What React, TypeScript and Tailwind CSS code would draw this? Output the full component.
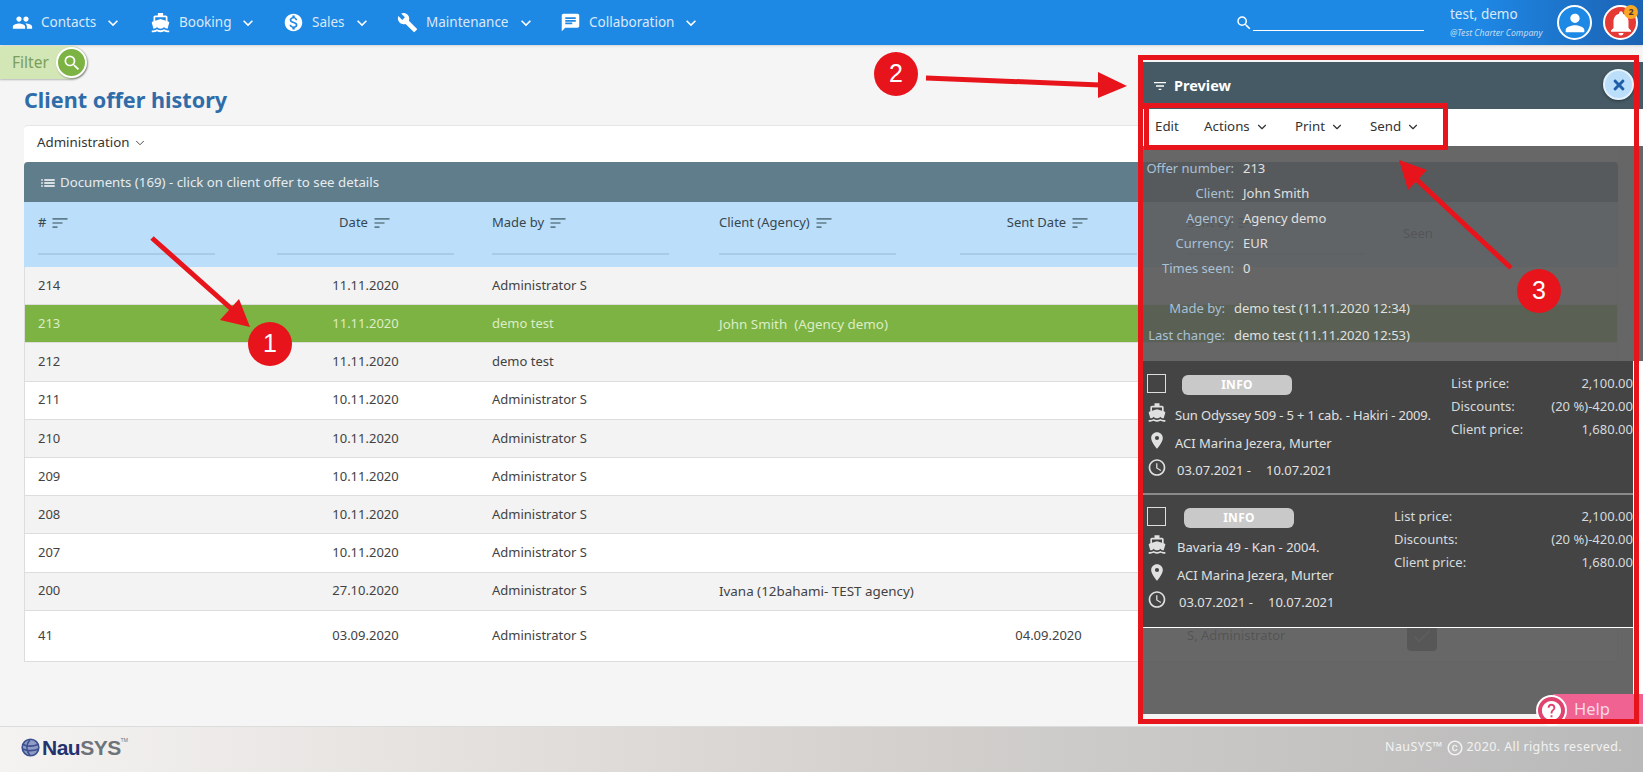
import { ChevronDown } from "lucide-react";
import {
  MdAccessTime,
  MdBuild,
  MdChat,
  MdCopyright,
  MdDirectionsBoat,
  MdFilterList,
  MdHelp,
  MdKeyboardArrowDown,
  MdList,
  MdLocationOn,
  MdMonetizationOn,
  MdNotifications,
  MdPeople,
  MdPerson,
  MdSearch,
  MdSort,
  MdCheck,
} from "react-icons/md";
import { FaTimes } from "react-icons/fa";

const menu = [
  { label: "Contacts", icon: MdPeople, width: "w-[138px]" },
  { label: "Booking", icon: MdDirectionsBoat, width: "w-[133px]" },
  { label: "Sales", icon: MdMonetizationOn, width: "w-[114px]" },
  { label: "Maintenance", icon: MdBuild, width: "w-[163px]" },
  { label: "Collaboration", icon: MdChat, width: "w-[150px]" },
];

const gridCols = "grid-cols-[239px_215px_227px_241px_227px_216px_1fr]";

const headers = [
  { label: "#" },
  { label: "Date", center: true },
  { label: "Made by" },
  { label: "Client (Agency)" },
  { label: "Sent Date", center: true },
  { label: "Sent by" },
];

const rows = [
  { id: "214", date: "11.11.2020", by: "Administrator S", bg: "bg-[#f3f3f3]" },
  { id: "213", date: "11.11.2020", by: "demo test", client: "John Smith\u00a0\u00a0(Agency demo)", bg: "bg-[#7cb342]", active: true },
  { id: "212", date: "11.11.2020", by: "demo test", bg: "bg-[#f3f3f3]" },
  { id: "211", date: "10.11.2020", by: "Administrator S", bg: "bg-white" },
  { id: "210", date: "10.11.2020", by: "Administrator S", bg: "bg-[#f3f3f3]" },
  { id: "209", date: "10.11.2020", by: "Administrator S", bg: "bg-white" },
  { id: "208", date: "10.11.2020", by: "Administrator S", bg: "bg-[#f3f3f3]" },
  { id: "207", date: "10.11.2020", by: "Administrator S", bg: "bg-white" },
  { id: "200", date: "27.10.2020", by: "Administrator S", client: "Ivana (12bahami- TEST agency)", bg: "bg-[#f3f3f3]" },
];

const info = [
  { label: "Offer number:", value: "213", cls: "h-[25px]", w: "w-[91px]" },
  { label: "Client:", value: "John Smith", cls: "h-[25px]", w: "w-[91px]" },
  { label: "Agency:", value: "Agency demo", cls: "h-[25px]", w: "w-[91px]" },
  { label: "Currency:", value: "EUR", cls: "h-[25px]", w: "w-[91px]" },
  { label: "Times seen:", value: "0", cls: "h-[26px]", w: "w-[91px]" },
  { label: "Made by:", value: "demo test (11.11.2020 12:34)", cls: "h-[27px] mt-[13px]", w: "w-[82px]" },
  { label: "Last change:", value: "demo test (11.11.2020 12:53)", cls: "h-[28px]", w: "w-[82px]" },
];

function Offer({
  yacht,
  yachtCls = "",
  priceWidth,
  offset,
  border,
  height,
  pad,
  listGap,
}: {
  yacht: string;
  yachtCls?: string;
  priceWidth: string;
  offset: string;
  border: string;
  height: string;
  pad: string;
  listGap: string;
}) {
  const prices = [
    ["List price:", "2,100.00"],
    ["Discounts:", "(20 %)-420.00"],
    ["Client price:", "1,680.00"],
  ];
  return (
    <div className={`flex justify-between bg-[#444444] pl-1 text-[13px] text-[#e0e0e0] ${border} ${height} ${pad}`}>
      <div>
        <div className="flex h-[19px] items-start">
          <span className="block size-[19px] border-[1.5px] border-[#dddddd]" />
          <span
            className={`mt-px flex h-5 w-[110px] items-center justify-center rounded-md bg-[#c9c9c9] text-[12px] font-bold tracking-wide text-white ${
              offset === "pl-[2px]" ? "ml-[18px]" : "ml-4"
            }`}
          >
            INFO
          </span>
        </div>
        <div className={listGap}>
          <div className="flex h-[27.5px] items-center">
            <MdDirectionsBoat className="-mt-[6px] w-5 shrink-0 text-[#e0e0e0]" size={21} />
            <span className={`ml-2 whitespace-nowrap ${offset} ${yachtCls}`}>{yacht}</span>
          </div>
          <div className="flex h-[27.5px] items-center">
            <MdLocationOn className="-mt-[6px] w-5 shrink-0 text-[#e0e0e0]" size={21} />
            <span className={`ml-2 whitespace-nowrap ${offset}`}>ACI Marina Jezera, Murter</span>
          </div>
          <div className="flex h-[27.5px] items-center">
            <MdAccessTime className="-mt-[6px] w-5 shrink-0 text-[#e0e0e0]" size={21} />
            <span className={`ml-[10px] w-[89px] whitespace-nowrap ${offset}`}>03.07.2021 -</span>
            <span className={`whitespace-nowrap ${offset === "pl-[2px]" ? "ml-[2px]" : ""}`}>10.07.2021</span>
          </div>
        </div>
      </div>
      <div className={`-mt-[2px] ${priceWidth}`}>
        {prices.map(([k, v]) => (
          <div key={k} className="flex h-[23px] items-center justify-between text-[#d5dadd]">
            <span>{k}</span>
            <span>{v}</span>
          </div>
        ))}
      </div>
    </div>
  );
}

export default function App() {
  return (
    <div className="relative flex h-[772px] w-full flex-col overflow-hidden bg-[#f5f5f5] font-['Noto_Sans',sans-serif] text-[13px] text-[#424242]">
      {/* top bar */}
      <header className="flex h-[45px] shrink-0 items-center bg-linear-to-r from-[#1e88e5] from-[90%] to-[#1b62b3] pl-3 text-[#dbe9f7] shadow-sm">
        {menu.map(({ label, icon: Icon, width }) => (
          <div key={label} className={`flex shrink-0 items-center ${width}`}>
            <Icon size={21} className="text-white" />
            <span className="ml-2 text-[13.5px]">{label}</span>
            <MdKeyboardArrowDown size={20} className="ml-[7px] text-white" />
          </div>
        ))}
        <div className="ml-[525px] flex shrink-0 items-center">
          <MdSearch size={18} className="text-white" />
          <div className="mt-[16px] h-px w-[171px] bg-white" />
        </div>
        <div className="ml-[26px] w-[107px] shrink-0 -mt-[2px]">
          <div className="text-[13.5px] leading-[18px]">test, demo</div>
          <div className="mt-[4px] whitespace-nowrap text-[8.7px] italic leading-[12px] text-[#c5dcf2]">@Test Charter Company</div>
        </div>
        <div className="flex size-[35px] shrink-0 items-center justify-center rounded-full border-2 border-white bg-[#1e88e5]">
          <MdPerson size={28} className="text-white" />
        </div>
        <div className="relative ml-[11px] flex size-[35px] shrink-0 items-center justify-center rounded-full border-2 border-white bg-[#e53935]">
          <MdNotifications size={30} className="text-white" />
          <span className="absolute -right-[2px] -top-[2px] flex size-[14px] items-center justify-center rounded-full bg-[#f9a825] text-[9px] font-bold text-[#4e342e]">
            2
          </span>
        </div>
      </header>

      {/* page */}
      <main className="min-h-0 flex-1 pr-[25px]">
        <div className="relative mt-px flex h-[33px] w-[87px] items-center rounded-r-full bg-[#d3e6b6] pl-3 shadow-[0_1px_2px_rgba(0,0,0,0.25)]">
          <span className="text-[15.5px] text-[#7a9f5a]">Filter</span>
          <span className="absolute right-0 top-px flex size-[31px] items-center justify-center rounded-full border-2 border-white bg-[#7cb342] shadow-[1px_1px_2px_rgba(0,0,0,0.35)]">
            <MdSearch size={20} className="text-white" />
          </span>
        </div>
        <div className="pl-6">
          <h1 className="mt-[6px] h-[40px] text-[21.6px] font-bold leading-[30px] text-[#2f6ca8]">Client offer history</h1>
          <div className="flex h-[37px] items-center rounded-t-sm border-t border-[#e6e6e6] bg-white pb-[2px] pl-[13px] text-[13.3px] text-[#333333]">
            Administration
            <ChevronDown size={14} strokeWidth={1.5} className="ml-[3px]" />
          </div>
          <div className="flex h-10 items-center rounded-t-sm bg-[#607d8b] pl-[15px] pt-px text-[#e6ecef]">
            <MdList size={18} className="text-white" />
            <span className="ml-[3px] text-[13.25px]">Documents (169) - click on client offer to see details</span>
          </div>
          <div className={`grid h-[65px] bg-[#bbdefb] pl-[14px] text-[#37474f] ${gridCols}`}>
            {headers.map((h) => (
              <div key={h.label} className="pt-[10px]">
                <div className={`flex h-[21px] w-[177px] items-center ${h.center ? "justify-center" : ""}`}>
                  <span>{h.label}</span>
                  <MdSort size={20} className="ml-1 text-[#607d8b]" />
                </div>
                <div className="mt-[20px] h-[2px] w-[177px] bg-[#a8cbe8]" />
              </div>
            ))}
            <div className="flex h-[64px] items-center text-[#37474f]">Seen</div>
          </div>
          <div className="border-x border-b border-[#dddddd]">
            {rows.map((r) => (
              <div
                key={r.id}
                className={`grid h-[38.2px] items-center border-b border-[#dddddd] pl-[13px] ${gridCols} ${r.bg} ${
                  r.active ? "text-[#dcedc8]" : ""
                }`}
              >
                <span>{r.id}</span>
                <span className="w-[177px] text-center">{r.date}</span>
                <span>{r.by}</span>
                <span className="text-[13.4px]">{r.client}</span>
              </div>
            ))}
            <div className={`grid h-[50px] items-center bg-white pl-[13px] ${gridCols}`}>
              <span>41</span>
              <span className="w-[177px] text-center">03.09.2020</span>
              <span>Administrator S</span>
              <span />
              <span className="w-[177px] text-center">04.09.2020</span>
              <span>S, Administrator</span>
              <span className="ml-1 flex h-[31px] w-[30px] items-center justify-center rounded-sm bg-[#5f5f5f] text-[#999999]">
                <MdCheck size={22} />
              </span>
            </div>
          </div>
        </div>
      </main>

      <footer className="flex h-[46px] shrink-0 items-center justify-between border-t border-[#dcdcdc] bg-linear-to-r from-[#f5f3f1] via-[#d6d3d0] to-[#b9b9b9] pb-[4px] pl-[21px] pr-[21px]">
        <div className="flex items-center">
          <svg width="19" height="19" viewBox="0 0 19 19" fill="none" stroke="#3c4f8f" strokeWidth="1.6">
            <circle cx="9.5" cy="9.5" r="8.3" fill="#8f9cc4" />
            <path d="M2 6.5c4 2 10 2 15 0M1.5 11c5 2 11 2 16 0M9 1.5c-4 5-4 11 0 16" />
          </svg>
          <span className="ml-[2px] font-['Liberation_Sans',sans-serif] text-[21px] font-bold tracking-[-0.5px]">
            <span className="text-[#24336e]">Nau</span>
            <span className="text-[#6d7378]">SYS</span>
          </span>
          <span className="mb-[14px] text-[5px] text-[#6d7378]">TM</span>
        </div>
        <div className="flex items-center text-[12.5px] tracking-[0.4px] text-[#f2f2f2]">
          NauSYS™
          <MdCopyright size={18} className="mx-[3px]" />
          2020. All rights reserved.
        </div>
      </footer>

      {/* preview panel */}
      <aside className="absolute left-[1143px] top-[62px] flex h-[652px] w-[500px] flex-col">
        <div className="flex h-[47px] shrink-0 items-center bg-[#455a64] pl-[9px] text-white">
          <MdFilterList size={16} />
          <span className="ml-[6px] text-[14.5px] font-bold">Preview</span>
        </div>
        <div className="flex h-[37px] shrink-0 items-center bg-white pb-[2px] pl-[12px] text-[13.3px] text-[#333333]">
          <span className="w-[49px]">Edit</span>
          <span className="flex w-[91px] items-center">
            Actions
            <ChevronDown size={14} strokeWidth={2} className="ml-[5px]" />
          </span>
          <span className="flex w-[75px] items-center">
            Print
            <ChevronDown size={14} strokeWidth={2} className="ml-[5px]" />
          </span>
          <span className="flex items-center">
            Send
            <ChevronDown size={14} strokeWidth={2} className="ml-[5px]" />
          </span>
        </div>
        <div className="h-[215px] shrink-0 bg-[#565656]/90 pt-[10px]">
          {info.map((row) => (
            <div key={row.label} className={`flex items-center ${row.cls}`}>
              <span className={`whitespace-nowrap text-right text-[#a9c1d6] ${row.w}`}>{row.label}</span>
              <span className="ml-[9px] whitespace-nowrap text-[#e0e0e0]">{row.value}</span>
            </div>
          ))}
        </div>
        <div className="flex min-h-0 flex-1">
          <div className="w-[490px] bg-[#565656]/90">
            <Offer
              yacht="Sun Odyssey 509 - 5 + 1 cab. - Hakiri - 2009."
              yachtCls="tracking-[-0.15px]"
              priceWidth="w-[182px]"
              offset=""
              border="border-b-2 border-[#8a8a8a]"
              height="h-[134px]"
              pad="pt-[13px]"
              listGap="mt-[9px]"
            />
            <Offer
              yacht="Bavaria 49 - Kan - 2004."
              priceWidth="w-[239px]"
              offset="pl-[2px]"
              border="border-b border-white"
              height="h-[133px]"
              pad="pt-[12px]"
              listGap="mt-[8px]"
            />
          </div>
          <div className="flex-1 bg-white" />
        </div>
      </aside>

      <button className="absolute left-[1603px] top-[69px] flex size-[31px] items-center justify-center rounded-full border-2 border-[#e3f2fd] bg-[#bbdefb] text-[#1f5fa8] shadow-[0_1px_3px_rgba(0,0,0,0.4)]">
        <FaTimes size={16} />
      </button>

      {/* help tab */}
      <div className="absolute left-[1553px] top-[694px] flex h-[30px] w-[90px] items-center bg-[#f06292] pl-[21px] pt-px text-[16.5px] text-[#fbd9e5]">
        Help
      </div>
      <div className="absolute left-[1536px] top-[695px] flex size-[31px] items-center justify-center rounded-full border-2 border-white bg-[#e0436f]">
        <MdHelp size={23} className="text-white" />
      </div>

      {/* annotations */}
      <div className="pointer-events-none absolute left-[1138px] top-[55px] h-[669px] w-[501px] border-[5px] border-[#e8141c]" />
      <div className="pointer-events-none absolute left-[1144px] top-[103px] h-[47px] w-[304px] border-[5px] border-[#e8141c]" />
      <svg className="pointer-events-none absolute left-0 top-0" width="1643" height="772" fill="#e8141c" stroke="none">
        <line x1="152" y1="238" x2="235" y2="312" stroke="#e8141c" strokeWidth="5" />
        <polygon points="250,327 239,299 220,320" />
        <line x1="926" y1="78" x2="1100" y2="85" stroke="#e8141c" strokeWidth="5" />
        <polygon points="1127,86 1098,72 1098,98" />
        <line x1="1511" y1="268" x2="1415" y2="178" stroke="#e8141c" strokeWidth="5" />
        <polygon points="1399,160 1427,170 1408,190" />
      </svg>
      {[
        { n: "1", cls: "left-[248px] top-[322px]" },
        { n: "2", cls: "left-[874px] top-[52px]" },
        { n: "3", cls: "left-[1517px] top-[269px]" },
      ].map((c) => (
        <div
          key={c.n}
          className={`absolute flex size-11 items-center justify-center rounded-full bg-[#e8141c] font-['Liberation_Sans',sans-serif] text-[25px] text-white ${c.cls}`}
        >
          {c.n}
        </div>
      ))}
    </div>
  );
}
